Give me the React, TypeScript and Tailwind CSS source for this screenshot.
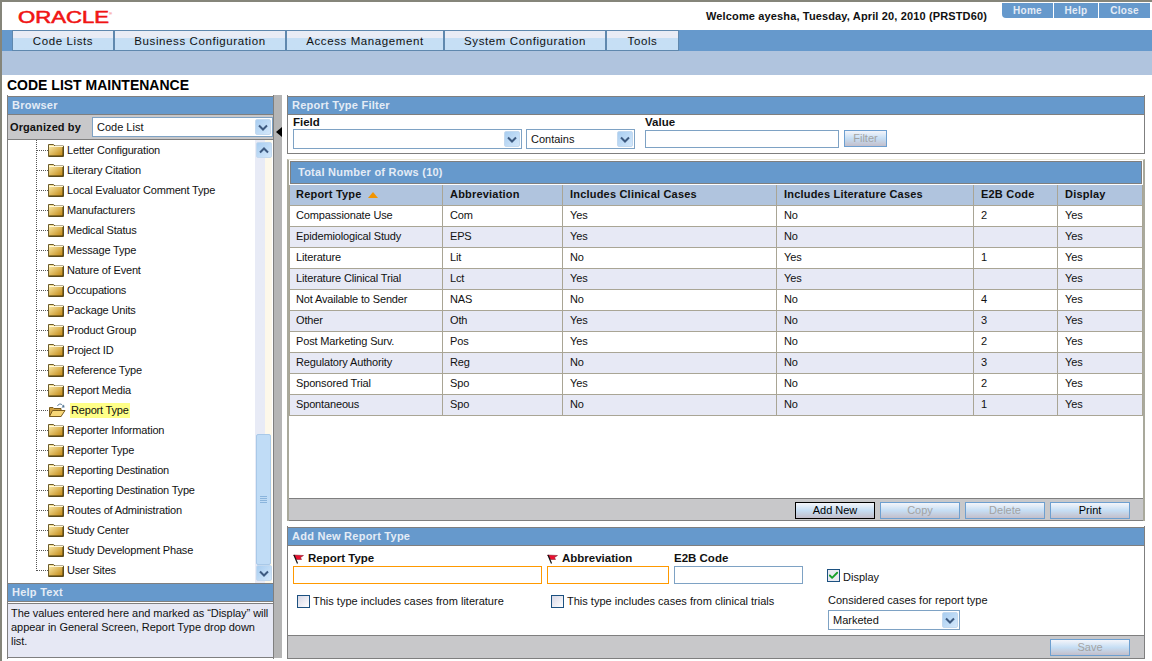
import { Check } from 'lucide-react';

const treeItems = [
  'Letter Configuration',
  'Literary Citation',
  'Local Evaluator Comment Type',
  'Manufacturers',
  'Medical Status',
  'Message Type',
  'Nature of Event',
  'Occupations',
  'Package Units',
  'Product Group',
  'Project ID',
  'Reference Type',
  'Report Media',
  'Report Type',
  'Reporter Information',
  'Reporter Type',
  'Reporting Destination',
  'Reporting Destination Type',
  'Routes of Administration',
  'Study Center',
  'Study Development Phase',
  'User Sites',
];

const rows = [
  ['Compassionate Use', 'Com', 'Yes', 'No', '2', 'Yes'],
  ['Epidemiological Study', 'EPS', 'Yes', 'No', '', 'Yes'],
  ['Literature', 'Lit', 'No', 'Yes', '1', 'Yes'],
  ['Literature Clinical Trial', 'Lct', 'Yes', 'Yes', '', 'Yes'],
  ['Not Available to Sender', 'NAS', 'No', 'No', '4', 'Yes'],
  ['Other', 'Oth', 'Yes', 'No', '3', 'Yes'],
  ['Post Marketing Surv.', 'Pos', 'Yes', 'No', '2', 'Yes'],
  ['Regulatory Authority', 'Reg', 'No', 'No', '3', 'Yes'],
  ['Sponsored Trial', 'Spo', 'Yes', 'No', '2', 'Yes'],
  ['Spontaneous', 'Spo', 'No', 'No', '1', 'Yes'],
];

const tabs = [
  { label: 'Code Lists', width: 'w-[102px]' },
  { label: 'Business Configuration', width: 'w-[172px]' },
  { label: 'Access Management', width: 'w-[158px]' },
  { label: 'System Configuration', width: 'w-[162px]' },
  { label: 'Tools', width: 'w-[73px]' },
];

const Chevron = ({ up = false }: { up?: boolean }) => (
  <svg width="10" height="7" viewBox="0 0 10 7">
    <path d={up ? 'M1 5.5 L5 1.5 L9 5.5' : 'M1 1.5 L5 5.5 L9 1.5'} fill="none" stroke="#3d5a80" strokeWidth="2" />
  </svg>
);

const ArrowBox = ({ up = false }: { up?: boolean }) => (
  <span className="flex h-[16px] w-[16px] shrink-0 items-center justify-center rounded-[2px] border border-[#c3d9ef] bg-gradient-to-br from-[#a8cdf0] to-[#d4e8fb]">
    <Chevron up={up} />
  </span>
);

const Folder = () => (
  <svg width="16" height="14" viewBox="0 0 16 14" className="shrink-0">
    <defs>
      <linearGradient id="fold" x1="0" y1="0" x2="1" y2="1">
        <stop offset="0" stopColor="#fff2b4" />
        <stop offset="1" stopColor="#bd8008" />
      </linearGradient>
    </defs>
    <path d="M0.5 3 V1.5 H5.5 L7 3 H15.5 V13.5 H0.5 Z" fill="url(#fold)" stroke="#6b5a2a" />
    <path d="M1 3.5 H15" stroke="#fff8d8" />
    <path d="M15 4 V13 H1" fill="none" stroke="#4d3d10" />
  </svg>
);

const OpenFolder = () => (
  <svg width="18" height="15" viewBox="0 0 18 15" className="shrink-0">
    <path d="M1.5 13.5 V4.5 H5 L6 5.5 H13 V13.5 Z" fill="#cf9f3e" stroke="#7a5c1e" />
    <path d="M1.5 13.5 L4.5 7.5 H17 L13 13.5 Z" fill="#f8d777" stroke="#7a5c1e" />
    <path d="M9.5 3 C10.5 0.5 13.5 0.5 14.5 2.5" fill="none" stroke="#4f7392" />
    <path d="M13.5 4.5 L16 1.5 L16.5 4.5 Z" fill="#4f7392" />
  </svg>
);

const Flag = () => (
  <svg width="11" height="10" viewBox="0 0 11 10" className="shrink-0">
    <path d="M0.5 1 L10.5 1.5 L7.5 3.5 L8.5 5.5 L3.5 5.5 Z" fill="#ea1030" stroke="#7a1020" strokeWidth="0.5" />
    <path d="M1 1 L4.5 9.5" stroke="#111" strokeWidth="1.2" />
  </svg>
);

const SelectBox = ({ width, value = '' }: { width: string; value?: string }) => (
  <div className={`flex h-[20px] items-center justify-between border border-[#7ea2c4] bg-white pr-[1px] pl-[4px] ${width}`}>
    <span>{value}</span>
    <ArrowBox />
  </div>
);

const Btn = ({ label, disabled = false, focus = false, width = 'w-[80px]' }: { label: string; disabled?: boolean; focus?: boolean; width?: string }) => (
  <div
    className={`flex h-[17px] items-center justify-center border bg-gradient-to-b from-[#f4f5fa] via-[#c6def4] to-[#c3bfcb] ${width} ${focus ? 'border-black' : 'border-[#6d9fd0]'} ${disabled ? 'text-[#a3a3a3]' : 'text-black'}`}
  >
    {label}
  </div>
);

const PanelBar = ({ title }: { title: string }) => (
  <div className="flex h-[19px] shrink-0 items-center border-y border-[#7f7f7f] bg-[#6699cc] pl-[4px] font-bold tracking-[0.25px] text-[#e4ecf6]">
    {title}
  </div>
);

const Box = () => <span className="h-[13px] w-[13px] shrink-0 border border-[#1c5180] bg-gradient-to-br from-[#d8d8e6] to-white" />;

export default function App() {
  return (
    <div className="flex h-[661px] w-[1152px] flex-col overflow-hidden border-t-2 border-l-2 border-[#85857a] bg-white font-['Liberation_Sans',Arial,sans-serif] text-[11px] leading-none text-[#111]">
      {/* top header */}
      <div className="flex h-[28px] shrink-0 items-start justify-between">
        <svg width="100" height="20" viewBox="0 0 100 20" className="mt-[6px] ml-[15px]">
          <text x="1" y="15" fontFamily="Liberation Sans" fontSize="17" fontWeight="400" fill="#f01414" stroke="#f01414" strokeWidth="0.6" textLength="91" lengthAdjust="spacingAndGlyphs">
            ORACLE
          </text>
          <text x="92" y="7" fontFamily="Liberation Sans" fontSize="4" fill="#f01414">
            ®
          </text>
        </svg>
        <div className="flex items-start">
          <span className="mt-[9px] mr-[15px] text-[11px] font-bold tracking-[0.14px] whitespace-nowrap">Welcome ayesha, Tuesday, April 20, 2010 (PRSTD60)</span>
          <div className="mt-[1px] mr-[2px] flex h-[15px] gap-[1px] text-[10px] font-bold tracking-[0.3px] text-[#e4ecf6]">
            <span className="flex w-[51px] items-center justify-center rounded-bl-[4px] bg-[#6699cc] pt-[1px]">Home</span>
            <span className="flex w-[44px] items-center justify-center bg-[#6699cc] pt-[1px]">Help</span>
            <span className="flex w-[51px] items-center justify-center bg-[#6699cc] pt-[1px]">Close</span>
          </div>
        </div>
      </div>

      {/* nav tabs */}
      <div className="flex h-[21px] shrink-0 items-stretch bg-[#6699cc] pl-[10px] text-[11.5px]">
        {tabs.map((tab) => (
          <div
            key={tab.label}
            className={`flex items-center justify-center border border-[#5f88ae] bg-gradient-to-b from-[#e9ecf5] from-38% to-[#c6dff5] to-38% pt-[2px] tracking-[0.6px] ${tab.width}`}
          >
            {tab.label}
          </div>
        ))}
      </div>
      <div className="h-[24px] shrink-0 bg-[#b0c4de]" />

      <div className="flex h-[20px] shrink-0 items-center pl-[5px] text-[14px] font-bold text-black">CODE LIST MAINTENANCE</div>

      {/* main */}
      <div className="flex h-[564px] shrink-0 pl-[5px]">
        {/* browser */}
        <div className="flex w-[267px] shrink-0 flex-col border-x border-[#7f7f7f]">
          <div className="h-[1px]" />
          <PanelBar title="Browser" />
          <div className="flex h-[25px] shrink-0 items-center justify-between border-b border-[#7f7f7f] bg-[#c8c8ca] pl-[2px] font-bold tracking-[0.1px]">
            Organized by
            <SelectBox width="w-[181px] font-normal tracking-normal" value="Code List" />
          </div>
          <div className="flex h-[443px] shrink-0 bg-white">
            <div className="relative flex-1 pl-[28px] tracking-[-0.18px]">
              <div className="absolute top-0 left-[28px] h-[431px] border-l border-dotted border-[#555]" />
              {treeItems.map((item) => (
                <div key={item} className="flex h-[20px] items-center">
                  <span className="ml-[1px] w-[11px] shrink-0 border-t border-dotted border-[#555]" />
                  {item === 'Report Type' ? (
                    <>
                      <OpenFolder />
                      <span className="ml-[4px] bg-[#ffff88] px-[1px] py-[2px] text-[#111]">{item}</span>
                    </>
                  ) : (
                    <>
                      <Folder />
                      <span className="ml-[3px] whitespace-nowrap">{item}</span>
                    </>
                  )}
                </div>
              ))}
            </div>
            <div className="mr-[1px] flex w-[17px] shrink-0 flex-col items-center bg-gradient-to-r from-[#e8ebf6] from-60% to-[#fdf8ea] to-60% pt-[2px]">
              <ArrowBox up />
              <div className="flex-1" />
              <div className="flex h-[131px] w-[15px] flex-col items-center justify-center gap-[1px] rounded-[2px] border border-[#a9c9e8] bg-[#c0dcf6]">
                <span className="h-[1px] w-[7px] bg-[#8ab4dc]" />
                <span className="h-[1px] w-[7px] bg-[#8ab4dc]" />
                <span className="h-[1px] w-[7px] bg-[#8ab4dc]" />
                <span className="h-[1px] w-[7px] bg-[#8ab4dc]" />
              </div>
              <ArrowBox />
              <div className="h-[2px]" />
            </div>
          </div>
          <PanelBar title="Help Text" />
          <div className="h-[1px] shrink-0" />
          <div className="h-[55px] shrink-0 border-y border-[#7f7f7f] bg-[#e6e8f4] pt-[2px] pr-[3px] pl-[3px] leading-[14px] tracking-[-0.05px]">
            The values entered here and marked as “Display” will appear in General Screen, Report Type drop down list.
          </div>
        </div>

        {/* splitter */}
        <div className="flex h-[563px] w-[8px] shrink-0 flex-col items-end bg-[#b5b5b5] pt-[32px]">
          <span className="h-0 w-0 border-y-[5px] border-r-[6px] border-y-transparent border-r-black" />
        </div>
        <div className="w-[5px] shrink-0" />

        {/* right column */}
        <div className="flex w-[858px] shrink-0 flex-col">
          {/* filter */}
          <div className="flex h-[59px] shrink-0 flex-col border-x border-b border-[#7f7f7f]">
            <div className="h-[1px]" />
            <PanelBar title="Report Type Filter" />
            <div className="flex gap-[4px] pl-[5px]">
              <div className="flex flex-col">
                <span className="flex h-[14px] items-center pt-[2px] text-[11.5px] font-bold">Field</span>
                <SelectBox width="w-[229px]" />
              </div>
              <div className="flex flex-col">
                <span className="h-[14px]" />
                <SelectBox width="w-[109px]" value="Contains" />
              </div>
              <div className="ml-[6px] flex flex-col">
                <span className="flex h-[14px] items-center pt-[2px] text-[11.5px] font-bold">Value</span>
                <div className="mt-[1px] h-[18px] w-[194px] border border-[#7ea2c4] bg-white" />
              </div>
              <div className="mt-[15px] ml-[1px]">
                <Btn label="Filter" disabled width="w-[43px]" />
              </div>
            </div>
          </div>
          <div className="h-[5px] shrink-0" />

          {/* grid */}
          <div className="flex h-[362px] shrink-0 flex-col border-t border-r-2 border-l-2 border-[#a9a99c] border-t-[#ece9d8] pt-[1px]">
            <div className="mr-[1px] ml-[1px] flex h-[23px] shrink-0 items-center border border-[#7f7f7f] bg-[#6699cc] pl-[7px] font-bold tracking-[0.25px] text-[#e4ecf6]">
              Total Number of Rows (10)
            </div>
            <div className="h-[1px] shrink-0" />
            <table className="w-[853px] table-fixed border-collapse">
              <colgroup>
                <col className="w-[153px]" />
                <col className="w-[120px]" />
                <col className="w-[214px]" />
                <col className="w-[197px]" />
                <col className="w-[84px]" />
                <col className="w-[85px]" />
              </colgroup>
              <thead>
                <tr className="h-[20px] bg-[#b0c4de] text-left font-bold">
                  {['Report Type', 'Abbreviation', 'Includes Clinical Cases', 'Includes Literature Cases', 'E2B Code', 'Display'].map((h, c) => (
                    <th key={h} className={`border border-t-0 border-[#a9a595] font-bold tracking-[0.2px] ${c === 0 ? 'pl-[6px]' : 'pl-[7px]'}`}>
                      <span className="flex items-center gap-[6px]">
                        {h}
                        {h === 'Report Type' && <span className="h-0 w-0 border-x-[5px] border-b-[6px] border-x-transparent border-b-[#f29400]" />}
                      </span>
                    </th>
                  ))}
                </tr>
              </thead>
              <tbody>
                {rows.map((row, index) => (
                  <tr key={index} className={`h-[21px] ${index % 2 === 1 ? 'bg-[#e7e9f5]' : 'bg-white'}`}>
                    {row.map((cell, c) => (
                      <td key={c} className={`border border-[#a9a595] tracking-[-0.15px] ${c === 0 ? 'pl-[6px]' : 'pl-[7px]'}`}>
                        {cell}
                      </td>
                    ))}
                  </tr>
                ))}
              </tbody>
            </table>
            <div className="flex-1" />
            <div className="flex h-[23px] shrink-0 items-center justify-end gap-[5px] border-y border-[#7f7f7f] bg-[#c8c8ca] pt-[1px] pr-[13px]">
              <Btn label="Add New" focus />
              <Btn label="Copy" disabled />
              <Btn label="Delete" disabled />
              <Btn label="Print" />
            </div>
          </div>
          <div className="h-[5px] shrink-0" />

          {/* add new */}
          <div className="flex flex-1 flex-col border-x border-b border-[#7f7f7f]">
            <div className="h-[1px]" />
            <PanelBar title="Add New Report Type" />
            <div className="flex flex-1 pl-[5px]">
              <div className="flex w-[534px] shrink-0 flex-col">
                <div className="flex gap-[5px]">
                  <div className="flex w-[249px] flex-col">
                    <span className="flex h-[20px] items-end gap-[4px] pb-[2px] text-[11.5px] font-bold">
                      <Flag />
                      Report Type
                    </span>
                    <div className="h-[18px] border border-[#ff9900]" />
                  </div>
                  <div className="flex w-[122px] flex-col">
                    <span className="flex h-[20px] items-end gap-[4px] pb-[2px] text-[11.5px] font-bold">
                      <Flag />
                      Abbreviation
                    </span>
                    <div className="h-[18px] border border-[#ff9900]" />
                  </div>
                  <div className="flex w-[129px] flex-col">
                    <span className="flex h-[20px] items-end pb-[2px] text-[11.5px] font-bold">E2B Code</span>
                    <div className="h-[18px] border border-[#7ea2c4]" />
                  </div>
                </div>
                <div className="mt-[11px] flex pl-[4px]">
                  <span className="flex w-[254px] items-center gap-[3px]">
                    <Box />
                    This type includes cases from literature
                  </span>
                  <span className="flex items-center gap-[3px]">
                    <Box />
                    This type includes cases from clinical trials
                  </span>
                </div>
              </div>
              <div className="flex flex-col pt-[23px]">
                <span className="flex h-[13px] items-start gap-[3px]">
                  <span className="flex h-[13px] w-[13px] items-center justify-center border border-[#1c5180] bg-[#e8eaf2]">
                    <Check size={11} strokeWidth={4} color="#16a02a" />
                  </span>
                  <span className="pt-[3px]">Display</span>
                </span>
                <span className="mt-[13px] ml-[1px]">Considered cases for report type</span>
                <div className="mt-[4px] ml-[1px]">
                  <SelectBox width="w-[132px]" value="Marketed" />
                </div>
              </div>
            </div>
            <div className="flex h-[23px] shrink-0 items-center justify-end border-t border-[#7f7f7f] bg-[#c8c8ca] pt-[1px] pr-[14px]">
              <Btn label="Save" disabled />
            </div>
          </div>
        </div>
      </div>
    </div>
  );
}
